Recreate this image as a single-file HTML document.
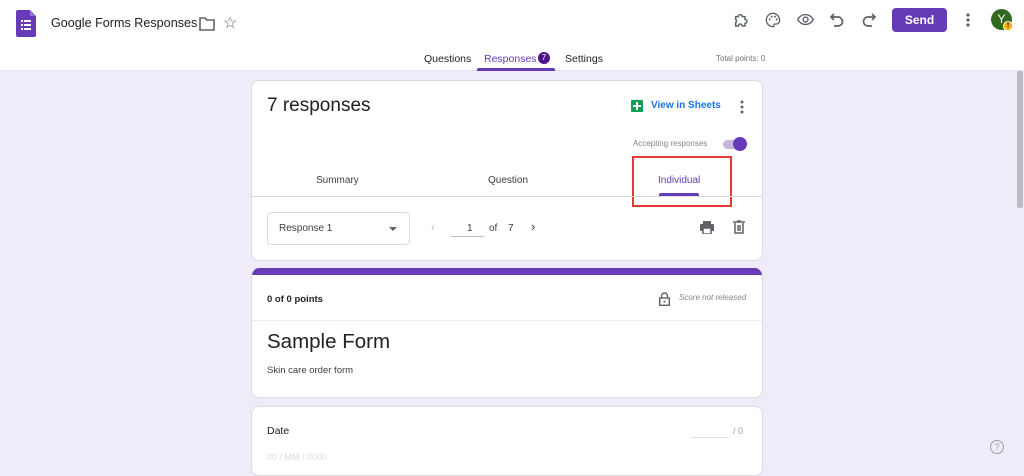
<!DOCTYPE html>
<html><head><style>
*{box-sizing:border-box;margin:0;padding:0}
body{width:1024px;height:463px;overflow:hidden;background:#f0ebf8;font-family:"Liberation Sans",Arial,sans-serif;color:#202124;position:relative}
.hdr{position:absolute;left:0;top:0;width:1024px;height:71px;background:#fff;border-bottom:1px solid #e6e0ef}
.abs{position:absolute}
.card{position:absolute;left:251px;width:512px;background:#fff;border-radius:8px;border:1px solid #dadce0}
.ic{position:absolute}
</style></head><body>
<div class="hdr">
 <svg class="ic" style="left:16px;top:10px" width="20" height="27" viewBox="0 0 20 27"><path d="M2 0h12l6 6v19a2 2 0 0 1-2 2H2a2 2 0 0 1-2-2V2a2 2 0 0 1 2-2z" fill="#673ab7"/><path d="M14 0l6 6h-6z" fill="#9575cd"/><g fill="#fff"><rect x="5" y="10" width="2" height="2"/><rect x="8" y="10" width="7" height="2"/><rect x="5" y="14" width="2" height="2"/><rect x="8" y="14" width="7" height="2"/><rect x="5" y="18" width="2" height="2"/><rect x="8" y="18" width="7" height="2"/></g></svg>
 <div class="abs" style="left:51px;top:16px;font-size:12.6px;color:#202124">Google Forms Responses</div>
 <svg class="ic" style="left:199px;top:17px" width="16" height="14" viewBox="0 0 16 14"><path d="M1 1h5l2 2h7v10H1z" fill="none" stroke="#5f6368" stroke-width="1.6"/></svg>
 <div class="abs" style="left:223px;top:13px;font-size:16px;color:#5f6368">☆</div>
 <svg class="ic" style="left:733px;top:12px" width="16" height="16" viewBox="0 0 24 24"><path d="M4 7h4a3 3 0 0 1 6 0h4v4a3 3 0 0 1 0 6v4h-4a3 3 0 0 0-6 0H4v-5a3 3 0 0 0 0-5z" fill="none" stroke="#5f6368" stroke-width="2.2"/></svg>
 <svg class="ic" style="left:765px;top:12px" width="16" height="16" viewBox="0 0 24 24"><path d="M12 2a10 10 0 0 0 0 20c1.5 0 2-1 1.5-2s0-2 1.5-2h2a5 5 0 0 0 5-5c0-6-4.5-11-10-11z" fill="none" stroke="#5f6368" stroke-width="2"/><circle cx="7" cy="11" r="1.5" fill="#5f6368"/><circle cx="10" cy="7" r="1.5" fill="#5f6368"/><circle cx="15" cy="7" r="1.5" fill="#5f6368"/><circle cx="17.5" cy="11" r="1.5" fill="#5f6368"/></svg>
 <svg class="ic" style="left:797px;top:13px" width="17" height="13" viewBox="0 0 24 16"><path d="M1 8c3-5 7-7 11-7s8 2 11 7c-3 5-7 7-11 7S4 13 1 8z" fill="none" stroke="#5f6368" stroke-width="2"/><circle cx="12" cy="8" r="3.5" fill="none" stroke="#5f6368" stroke-width="2"/></svg>
 <svg class="ic" style="left:830px;top:12px" width="14" height="15" viewBox="0 0 14 15"><path d="M4 2L1 5l3 3M1 5h7a4.5 4.5 0 0 1 0 9H4" fill="none" stroke="#5f6368" stroke-width="1.7"/></svg>
 <svg class="ic" style="left:862px;top:12px" width="14" height="15" viewBox="0 0 14 15"><path d="M10 2l3 3-3 3M13 5H6a4.5 4.5 0 0 0 0 9h4" fill="none" stroke="#5f6368" stroke-width="1.7"/></svg>
 <div class="abs" style="left:892px;top:8px;width:55px;height:24px;background:#673ab7;border-radius:4px;color:#fff;font-size:12px;font-weight:bold;text-align:center;line-height:24px">Send</div>
 <svg class="ic" style="left:966px;top:13px" width="4" height="14"><circle cx="2" cy="2" r="1.6" fill="#5f6368"/><circle cx="2" cy="7" r="1.6" fill="#5f6368"/><circle cx="2" cy="12" r="1.6" fill="#5f6368"/></svg>
 <div class="abs" style="left:991px;top:9px;width:21px;height:21px;border-radius:50%;background:#33691e;color:#fff;font-size:12px;text-align:center;line-height:21px">Y</div>
 <div class="abs" style="left:1003px;top:21px;width:10px;height:10px;border-radius:50%;background:#f9ab00;border:1px solid #fff;font-size:7px;font-weight:bold;text-align:center;line-height:8px;color:#202124">!</div>
 <div class="abs" style="left:424px;top:53px;font-size:10.5px;color:#202124">Questions</div>
 <div class="abs" style="left:484px;top:53px;font-size:10.5px;color:#673ab7">Responses</div>
 <div class="abs" style="left:538px;top:52px;width:12px;height:12px;border-radius:50%;background:#4a148c;color:#fff;font-size:8px;text-align:center;line-height:12px">7</div>
 <div class="abs" style="left:565px;top:53px;font-size:10.5px;color:#202124">Settings</div>
 <div class="abs" style="left:477px;top:68px;width:78px;height:3px;background:#673ab7;border-radius:2px 2px 0 0"></div>
 <div class="abs" style="left:716px;top:54px;font-size:8px;color:#70757a">Total points: 0</div>
</div>
<div class="abs" style="left:1017px;top:71px;width:6px;height:137px;background:#bdbac4;border-radius:2px"></div>

<div class="card" style="top:80px;height:181px">
 <div class="abs" style="left:15px;top:14px;font-size:19px;color:#202124">7 responses</div>
 <svg class="ic" style="left:379px;top:19px" width="12" height="12"><rect width="12" height="12" rx="1" fill="#0f9d58"/><rect x="5" y="2" width="2" height="8" fill="#fff"/><rect x="2" y="5" width="8" height="2" fill="#fff"/></svg>
 <div class="abs" style="left:399px;top:19px;font-size:10px;color:#1a73e8;font-weight:bold">View in Sheets</div>
 <svg class="ic" style="left:488px;top:19px" width="4" height="14"><circle cx="2" cy="2" r="1.5" fill="#5f6368"/><circle cx="2" cy="7" r="1.5" fill="#5f6368"/><circle cx="2" cy="12" r="1.5" fill="#5f6368"/></svg>
 <div class="abs" style="left:381px;top:58px;font-size:8px;color:#80868b">Accepting responses</div>
 <div class="abs" style="left:471px;top:59px;width:22px;height:9px;border-radius:5px;background:#c5b8df"></div>
 <div class="abs" style="left:481px;top:56px;width:14px;height:14px;border-radius:50%;background:#673ab7"></div>
 <div class="abs" style="left:64px;top:94px;font-size:10px;color:#3c4043">Summary</div>
 <div class="abs" style="left:236px;top:94px;font-size:10px;color:#3c4043">Question</div>
 <div class="abs" style="left:406px;top:94px;font-size:10px;color:#673ab7">Individual</div>
 <div class="abs" style="left:407px;top:112px;width:40px;height:3px;background:#673ab7;border-radius:2px 2px 0 0"></div>
 <div class="abs" style="left:380px;top:75px;width:100px;height:51px;border:2px solid #e53935"></div>
 <div class="abs" style="left:0;top:115px;width:510px;height:1px;background:#dadce0"></div>
 <div class="abs" style="left:15px;top:131px;width:143px;height:33px;border:1px solid #dadce0;border-radius:4px"></div>
 <div class="abs" style="left:27px;top:142px;font-size:10px;color:#3c4043">Response 1</div>
 <div class="abs" style="left:137px;top:146px;width:0;height:0;border-left:4px solid transparent;border-right:4px solid transparent;border-top:4px solid #5f6368"></div>
 <div class="abs" style="left:179px;top:139px;font-size:12px;color:#bdc1c6">‹</div>
 <div class="abs" style="left:199px;top:155px;width:33px;height:1px;background:#bdc1c6"></div>
 <div class="abs" style="left:215px;top:142px;font-size:10px;color:#3c4043">1</div>
 <div class="abs" style="left:237px;top:142px;font-size:10px;color:#3c4043">of</div>
 <div class="abs" style="left:256px;top:142px;font-size:10px;color:#3c4043">7</div>
 <div class="abs" style="left:279px;top:138px;font-size:13px;color:#3c4043">›</div>
 <svg class="ic" style="left:448px;top:140px" width="14" height="13" viewBox="0 0 14 13"><rect x="3" y="0" width="8" height="3" fill="#5f6368"/><rect x="0" y="3" width="14" height="7" rx="1" fill="#5f6368"/><rect x="3" y="7" width="8" height="6" fill="#fff" stroke="#5f6368" stroke-width="1.5"/></svg>
 <svg class="ic" style="left:481px;top:139px" width="12" height="14" viewBox="0 0 12 14"><path d="M0 2h12M4 1h4M2 3v10h8V3M5 5v6M7 5v6" fill="none" stroke="#5f6368" stroke-width="1.5"/></svg>
</div>

<div class="card" style="top:268px;height:130px;border-top:none;overflow:hidden">
 <div class="abs" style="left:0;top:0;width:512px;height:7px;background:#673ab7"></div>
 <div class="abs" style="left:15px;top:26px;font-size:9.5px;font-weight:bold;color:#202124">0 of 0 points</div>
 <svg class="ic" style="left:407px;top:24px" width="11" height="14" viewBox="0 0 11 14"><path d="M2.5 6V4a3 3 0 0 1 6 0v2" fill="none" stroke="#5f6368" stroke-width="1.4"/><rect x="0.7" y="6" width="9.6" height="7.3" fill="none" stroke="#5f6368" stroke-width="1.4"/><circle cx="5.5" cy="9.6" r="1" fill="#5f6368"/></svg>
 <div class="abs" style="left:427px;top:25px;font-size:8px;font-style:italic;color:#80868b">Score not released</div>
 <div class="abs" style="left:0;top:52px;width:512px;height:1px;background:#eceaf0"></div>
 <div class="abs" style="left:15px;top:62px;font-size:20.5px;color:#202124">Sample Form</div>
 <div class="abs" style="left:15px;top:97px;font-size:9.5px;color:#3c4043">Skin care order form</div>
</div>

<div class="card" style="top:406px;height:70px">
 <div class="abs" style="left:15px;top:18px;font-size:10.5px;color:#202124">Date</div>
 <div class="abs" style="left:440px;top:30px;width:37px;height:1px;background:#e0e0e0"></div>
 <div class="abs" style="left:481px;top:19px;font-size:9px;color:#9aa0a6">/ 0</div>
 <div class="abs" style="left:15px;top:45px;font-size:9px;color:#dadce0">00 / MM / 0000</div>
</div>

<div class="abs" style="left:990px;top:440px;width:14px;height:14px;border-radius:50%;border:1.3px solid #9aa0a6;font-size:9px;color:#9aa0a6;text-align:center;line-height:12px">?</div>
</body></html>
